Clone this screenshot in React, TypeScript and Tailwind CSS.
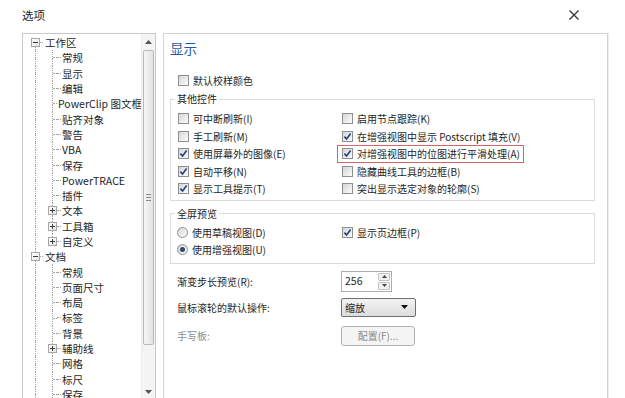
import type { ReactNode } from "react";

type TreeNode = { t: string; lvl: 0 | 1; box?: "minus" | "plus"; first?: boolean; last?: boolean };

const tree: TreeNode[] = [
  { t: "工作区", lvl: 0, box: "minus", first: true },
  { t: "常规", lvl: 1 },
  { t: "显示", lvl: 1 },
  { t: "编辑", lvl: 1 },
  { t: "PowerClip 图文框", lvl: 1 },
  { t: "贴齐对象", lvl: 1 },
  { t: "警告", lvl: 1 },
  { t: "VBA", lvl: 1 },
  { t: "保存", lvl: 1 },
  { t: "PowerTRACE", lvl: 1 },
  { t: "插件", lvl: 1 },
  { t: "文本", lvl: 1, box: "plus" },
  { t: "工具箱", lvl: 1, box: "plus" },
  { t: "自定义", lvl: 1, box: "plus", last: true },
  { t: "文档", lvl: 0, box: "minus" },
  { t: "常规", lvl: 1 },
  { t: "页面尺寸", lvl: 1 },
  { t: "布局", lvl: 1 },
  { t: "标签", lvl: 1 },
  { t: "背景", lvl: 1 },
  { t: "辅助线", lvl: 1, box: "plus" },
  { t: "网格", lvl: 1 },
  { t: "标尺", lvl: 1 },
  { t: "保存", lvl: 1 },
];

const dot = "border-dotted border-[#a3a3a3]";

function Rail({ top, bottom, children }: { top?: boolean; bottom?: boolean; children?: ReactNode }) {
  return (
    <div className="flex w-[9px] shrink-0 flex-col items-center">
      <div className={top ? `flex-1 border-l ${dot}` : "flex-1"} />
      {children}
      <div className={bottom ? `flex-1 border-l ${dot}` : "flex-1"} />
    </div>
  );
}

function TreeBox({ plus }: { plus?: boolean }) {
  return (
    <div className="grid h-[9px] w-[9px] shrink-0 place-items-center border border-[#a6a6a6] bg-[linear-gradient(135deg,#ffffff,#e4e4e4)]">
      <div className="[grid-area:1/1] h-px w-[5px] bg-[#3c3c3c]" />
      {plus && <div className="[grid-area:1/1] h-[5px] w-px bg-[#3c3c3c]" />}
    </div>
  );
}

function Stub({ w }: { w: string }) {
  return (
    <div className={`flex items-center ${w}`}>
      <div className={`h-0 w-full border-t ${dot}`} />
    </div>
  );
}

function TreeRow({ n }: { n: TreeNode }) {
  if (n.lvl === 0) {
    return (
      <div className="flex h-[15.3px]">
        <div className="w-[8px] shrink-0" />
        <Rail top={!n.first} bottom>
          <TreeBox plus={n.box === "plus"} />
        </Rail>
        <Stub w="w-[3px]" />
        <span className="self-center whitespace-nowrap pl-[2px] leading-[15px]">{n.t}</span>
      </div>
    );
  }
  return (
    <div className="flex h-[15.3px]">
      <div className="w-[8px] shrink-0" />
      <Rail top bottom />
      <div className="w-[8px] shrink-0" />
      <Rail top bottom={!n.last}>
        {n.box ? (
          <TreeBox plus={n.box === "plus"} />
        ) : (
          <div className="flex w-full">
            <div className="flex-1" />
            <div className={`h-0 flex-1 border-t ${dot}`} />
          </div>
        )}
      </Rail>
      <Stub w="w-[4px]" />
      <span className="self-center whitespace-nowrap pl-[1px] leading-[15px]">{n.t}</span>
    </div>
  );
}

function Check({ on }: { on?: boolean }) {
  return (
    <span className="grid h-[11px] w-[11px] shrink-0 place-items-center border border-[#8e8f8f] bg-[linear-gradient(135deg,#d6d6d6,#fbfbfb)]">
      {on && (
        <svg width="9" height="9" viewBox="0 0 9 9">
          <path d="M1.4 4.6 L3.6 7 L7.6 1.6" fill="none" stroke="#233f84" strokeWidth="1.6" />
        </svg>
      )}
    </span>
  );
}

function Radio({ on }: { on?: boolean }) {
  return (
    <span className="grid h-[11px] w-[11px] shrink-0 place-items-center rounded-full border border-[#8e8f8f] bg-[linear-gradient(135deg,#d6d6d6,#fbfbfb)]">
      {on && <span className="h-[5px] w-[5px] rounded-full bg-[#2f4a72]" />}
    </span>
  );
}

function Item({ on, label }: { on?: boolean; label: string }) {
  return (
    <div className="flex h-[17.5px] items-center gap-[4px] whitespace-nowrap">
      <Check on={on} />
      <span>{label}</span>
    </div>
  );
}

function Scrollbar() {
  return (
    <div className="flex w-[14px] shrink-0 flex-col border-l border-[#ececec] bg-[#f4f4f4] pb-[2px]">
      <div className="flex h-[16px] items-center justify-center">
        <svg width="7" height="4" viewBox="0 0 7 4">
          <path d="M0 4 L3.5 0 L7 4 Z" fill="#555" />
        </svg>
      </div>
      <div className="mx-px flex h-[295px] flex-col items-center justify-center gap-[2px] rounded-[2px] border border-[#b9b9b9] bg-[linear-gradient(90deg,#f6f6f6,#e2e2e2)]">
        <div className="h-px w-[5px] bg-[#8a8a8a]" />
        <div className="h-px w-[5px] bg-[#8a8a8a]" />
        <div className="h-px w-[5px] bg-[#8a8a8a]" />
      </div>
      <div className="flex-1" />
      <div className="flex h-[16px] items-center justify-center">
        <svg width="7" height="4" viewBox="0 0 7 4">
          <path d="M0 0 L3.5 4 L7 0 Z" fill="#555" />
        </svg>
      </div>
    </div>
  );
}

export default function App() {
  return (
    <div className="relative h-[398px] w-[625px] overflow-hidden bg-white font-['Noto_Sans_CJK_SC',sans-serif] text-[#1e1e1e]">
      <div className="flex h-[33px] items-start justify-between pl-[22px] pr-[46px]">
        <span className="mt-[7px] text-[11.5px] leading-[16px]">选项</span>
        <svg className="mt-[10px]" width="10" height="10" viewBox="0 0 10 10">
          <path d="M0.5 0.5 L9.5 9.5 M9.5 0.5 L0.5 9.5" stroke="#333" strokeWidth="1.3" />
        </svg>
      </div>

      <div className="flex pl-[22px]">
        {/* tree */}
        <div className="flex h-[370px] w-[134px] shrink-0 border border-[#c9c9c9] text-[10.5px]">
          <div className="flex-1 overflow-hidden pt-[1px]">
            {tree.map((n, i) => (
              <TreeRow key={i} n={n} />
            ))}
          </div>
          <Scrollbar />
        </div>

        {/* settings page */}
        <div className="ml-[7px] h-[370px] w-[445px] shrink-0 border border-[#d2d2d2] text-[10px] shadow-[1px_0_0_#ededed]">
          <div className="pl-[6px] pt-[5px] text-[13.5px] leading-[18px] text-[#1d5aa6]">显示</div>

          <div className="mt-[15px] flex h-[16px] items-center gap-[4px] pl-[14px]">
            <Check />
            <span>默认校样颜色</span>
          </div>

          <fieldset className="ml-[6px] mr-[12px] mt-[3px] border border-[#dcdcdc] pb-[2px]">
            <legend className="ml-[4px] px-[2px] leading-[16px]">其他控件</legend>
            <div className="grid grid-cols-[164px_1fr] pl-[7px] pt-[3px]">
              <Item label="可中断刷新(I)" />
              <Item label="启用节点跟踪(K)" />
              <Item label="手工刷新(M)" />
              <Item on label="在增强视图中显示 Postscript 填充(V)" />
              <Item on label="使用屏幕外的图像(E)" />
              <div className="-ml-[5px] flex h-[17.5px] w-fit items-center gap-[4px] whitespace-nowrap border border-[#d46666] pl-[4px] pr-[3px]">
                <Check on />
                <span>对增强视图中的位图进行平滑处理(A)</span>
              </div>
              <Item on label="自动平移(N)" />
              <Item label="隐藏曲线工具的边框(B)" />
              <Item on label="显示工具提示(T)" />
              <Item label="突出显示选定对象的轮廓(S)" />
            </div>
          </fieldset>

          <fieldset className="ml-[6px] mr-[12px] mt-[5px] border border-[#dcdcdc] pb-[5px]">
            <legend className="ml-[4px] px-[2px] leading-[16px]">全屏预览</legend>
            <div className="grid grid-cols-[165px_1fr] pl-[6px] pt-[2px]">
              <div className="flex h-[17px] items-center gap-[4px] whitespace-nowrap">
                <Radio />
                <span>使用草稿视图(D)</span>
              </div>
              <div className="flex h-[17px] items-center gap-[4px] whitespace-nowrap">
                <Check on />
                <span>显示页边框(P)</span>
              </div>
              <div className="flex h-[17px] items-center gap-[4px] whitespace-nowrap">
                <Radio on />
                <span>使用增强视图(U)</span>
              </div>
            </div>
          </fieldset>

          <div className="grid grid-cols-[164px_auto] items-center pl-[13px]">
            <span className="mt-[7px]">渐变步长预览(R):</span>
            <div className="mt-[7px] flex h-[21px] w-[51px] border border-[#abadb3] bg-white">
              <span className="flex-1 self-center pl-[3px] text-[10.5px]">256</span>
              <div className="flex w-[14px] flex-col gap-px p-px">
                <div className="flex flex-1 items-center justify-center rounded-[1px] border border-[#c3c3c3] bg-[#f1f1f1]">
                  <svg width="5" height="3" viewBox="0 0 5 3">
                    <path d="M0 3 L2.5 0 L5 3 Z" fill="#444" />
                  </svg>
                </div>
                <div className="flex flex-1 items-center justify-center rounded-[1px] border border-[#c3c3c3] bg-[#f1f1f1]">
                  <svg width="5" height="3" viewBox="0 0 5 3">
                    <path d="M0 0 L2.5 3 L5 0 Z" fill="#444" />
                  </svg>
                </div>
              </div>
            </div>

            <span className="mt-[6px]">鼠标滚轮的默认操作:</span>
            <div className="mt-[6px] flex h-[19px] w-[75px] items-center justify-between rounded-[2px] border border-[#707070] bg-[linear-gradient(180deg,#f3f3f3,#dddddd)] pl-[3px] pr-[7px]">
              <span>缩放</span>
              <svg width="7" height="4" viewBox="0 0 7 4">
                <path d="M0 0 L3.5 4 L7 0 Z" fill="#111" />
              </svg>
            </div>

            <span className="mt-[9px] text-[#8c8c8c]">手写板:</span>
            <div className="mt-[9px] flex h-[20px] w-[74px] items-center justify-center rounded-[3px] border border-[#adb2b5] bg-[#f4f4f4] text-[#8a8a8a]">
              配置(F)...
            </div>
          </div>
        </div>
      </div>
    </div>
  );
}
